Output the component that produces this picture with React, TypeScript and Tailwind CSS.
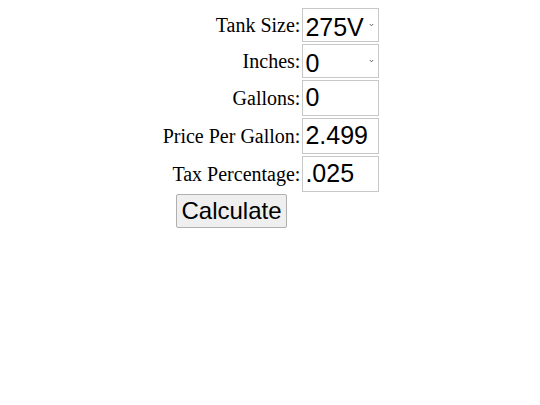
import { useState } from 'react'

const serif = "font-['Liberation_Serif','Times_New_Roman',serif]"
const sans = "font-['Liberation_Sans',Arial,sans-serif]"

function Label({ children }: { children: string }) {
  return <div className={`${serif} text-[20px] text-black text-right self-center leading-none`}>{children}</div>
}

function Chevron() {
  return (
    <svg className="pointer-events-none absolute right-[5px] top-1/2 -translate-y-1/2" width="5" height="4" viewBox="0 0 5 4">
      <path d="M0.8 1 L2.5 2.8 L4.2 1" fill="none" stroke="#555" strokeWidth="0.9" />
    </svg>
  )
}

export default function App() {
  const [tank, setTank] = useState('275V')
  const [inches, setInches] = useState('0')
  const [gallons, setGallons] = useState('0')
  const [price, setPrice] = useState('2.499')
  const [tax, setTax] = useState('.025')

  const boxCls = `${sans} w-[77px] text-[25px] text-black bg-white border border-[#c8c8c8] px-[2px] outline-none`

  return (
    <div className="bg-white min-h-[405px] pt-2">
      <div className="grid grid-cols-[auto_auto] justify-center gap-x-[2px] gap-y-[2px] ml-[2px]">
        <Label>Tank Size:</Label>
        <div className="relative w-[77px]">
          <select className={`${boxCls} h-[34px] appearance-none rounded-none`} value={tank} onChange={(e) => setTank(e.target.value)}>
            <option>275V</option>
            <option>275H</option>
            <option>330V</option>
          </select>
          <Chevron />
        </div>
        <Label>Inches:</Label>
        <div className="relative w-[77px]">
          <select className={`${boxCls} h-[34px] appearance-none rounded-none`} value={inches} onChange={(e) => setInches(e.target.value)}>
            {Array.from({ length: 45 }, (_, i) => (
              <option key={i}>{i}</option>
            ))}
          </select>
          <Chevron />
        </div>
        <Label>Gallons:</Label>
        <input className={`${boxCls} h-[36px]`} value={gallons} onChange={(e) => setGallons(e.target.value)} />
        <Label>Price Per Gallon:</Label>
        <input className={`${boxCls} h-[36px]`} value={price} onChange={(e) => setPrice(e.target.value)} />
        <Label>Tax Percentage:</Label>
        <input className={`${boxCls} h-[36px]`} value={tax} onChange={(e) => setTax(e.target.value)} />
        <div className="flex justify-center">
          <button
            className={`${sans} h-[34px] text-[24px] text-black bg-[#efefef] border border-[#b0b0b0] rounded-[2px] px-[4px] leading-none`}
          >
            Calculate
          </button>
        </div>
        <div />
      </div>
    </div>
  )
}
